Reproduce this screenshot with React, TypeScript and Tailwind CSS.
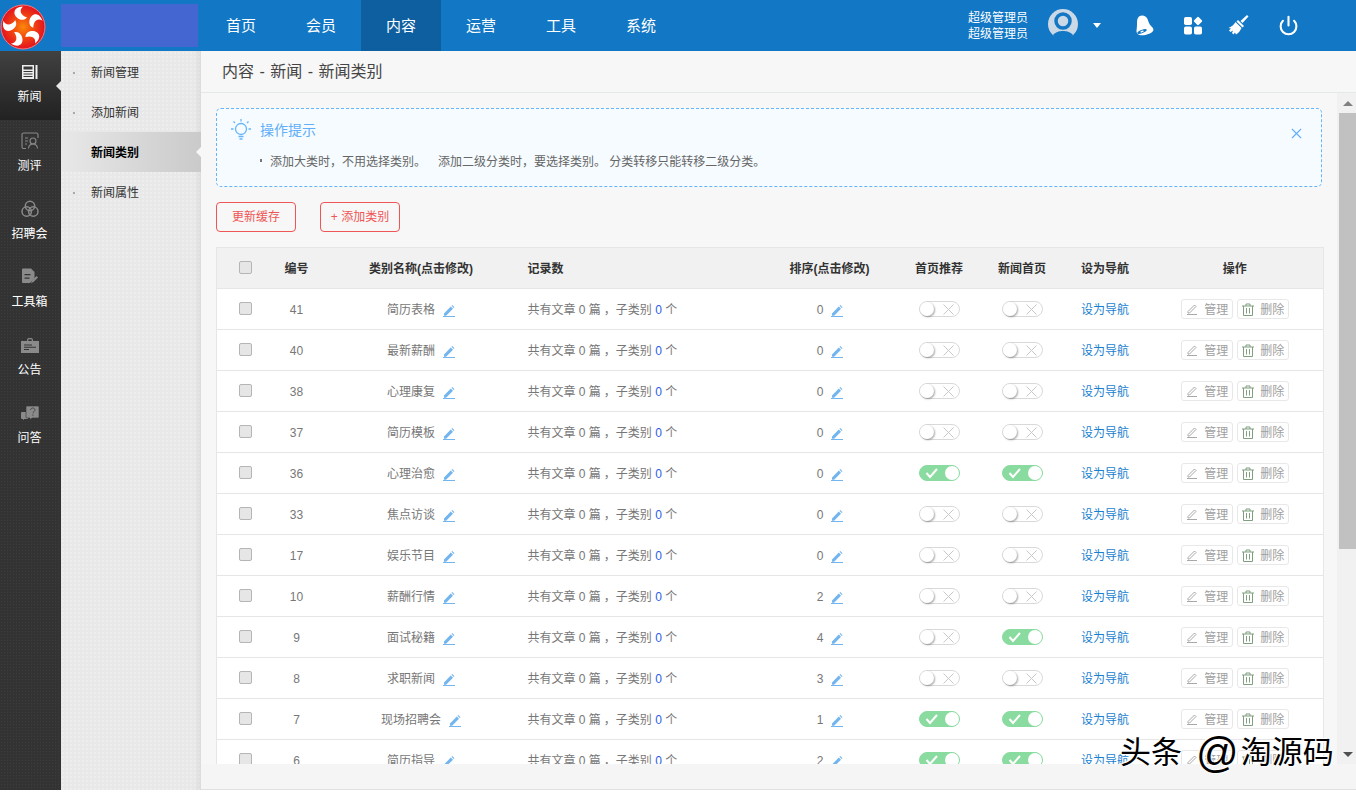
import { Power, X } from 'lucide-react';
import { type FC } from 'react';

const topNav = ['首页', '会员', '内容', '运营', '工具', '系统'];
const subNav = ['新闻管理', '添加新闻', '新闻类别', '新闻属性'];

const rows = [
  { id: 41, name: '简历表格', sort: 0, home: false, news: false },
  { id: 40, name: '最新薪酬', sort: 0, home: false, news: false },
  { id: 38, name: '心理康复', sort: 0, home: false, news: false },
  { id: 37, name: '简历模板', sort: 0, home: false, news: false },
  { id: 36, name: '心理治愈', sort: 0, home: true, news: true },
  { id: 33, name: '焦点访谈', sort: 0, home: false, news: false },
  { id: 17, name: '娱乐节目', sort: 0, home: false, news: false },
  { id: 10, name: '薪酬行情', sort: 2, home: false, news: false },
  { id: 9, name: '面试秘籍', sort: 4, home: false, news: true },
  { id: 8, name: '求职新闻', sort: 3, home: false, news: false },
  { id: 7, name: '现场招聘会', sort: 1, home: true, news: true },
  { id: 6, name: '简历指导', sort: 2, home: true, news: true }
];

const Logo: FC = () => (
  <svg width="46" height="46" viewBox="-23 -23 46 46" className="mt-[2px]">
    <defs>
      <radialGradient id="logoCore">
        <stop offset="0" stopColor="#f98a0a" />
        <stop offset="0.4" stopColor="#f4500e" />
        <stop offset="1" stopColor="#e3121f" />
      </radialGradient>
    </defs>
    <circle r="22" fill="url(#logoCore)" stroke="#f77" strokeWidth="1" />
    {[0, 72, 144, 216, 288].map((angle) => (
      <path
        key={angle}
        d="M-4-8C-11-12-10-20 0-20.500-4-17-3-12 4-9.500 2-7-1-6.500-4-8Z"
        fill="#fff"
        transform={`rotate(${angle})`}
      />
    ))}
  </svg>
);

const NewsIcon: FC = () => (
  <svg width="16" height="16" viewBox="0 0 16 16" fill="#eee">
    <path d="M0 1h12v14H0zM1.500 2.500v3h9v-3zM1.500 7v1h9V7zM1.500 9.500v1h9v-1zM1.500 12v1h9v-1z" fillRule="evenodd" />
    <rect x="13.500" y="1" width="2" height="14" />
  </svg>
);

const ReviewIcon: FC = () => (
  <svg width="18" height="18" viewBox="0 0 18 18" fill="none" stroke="#8a8a8a" strokeWidth="1.100">
    <path d="M5 16.500H2.500a1.500 1.500 0 0 1-1.500-1.500V2.500A1.500 1.500 0 0 1 2.500 1h13A1.500 1.500 0 0 1 17 2.500V6" />
    <path d="M4 6h3M4 9h3M4 12h2" />
    <circle cx="12" cy="9" r="3" />
    <path d="M7.500 16.500c.3-3 2-4.500 4.500-4.500s4.200 1.500 4.500 4.500" />
  </svg>
);

const FairIcon: FC = () => (
  <svg width="18" height="18" viewBox="0 0 18 18" fill="none" stroke="#8a8a8a" strokeWidth="1.500">
    <circle cx="9" cy="6" r="4.700" />
    <circle cx="5.700" cy="11.500" r="4.700" />
    <circle cx="12.300" cy="11.500" r="4.700" />
  </svg>
);

const ToolIcon: FC = () => (
  <svg width="17" height="18" viewBox="0 0 17 18" fill="#8a8a8a">
    <path d="M1 1.500A1 1 0 0 1 2 .5h8l3.500 3.500v6l-4.500 5H2a1 1 0 0 1-1-1z" />
    <path d="M3.500 6h6v1.300h-6zM3.500 9.500h5v1.300h-5z" fill="#333" />
    <path d="M10 15l1-2.500 4.500-4.500 1.500 1.500-4.500 4.500z" />
  </svg>
);

const NoticeIcon: FC = () => (
  <svg width="18" height="15" viewBox="0 0 18 15" fill="#8a8a8a">
    <path d="M6 3V2a2 2 0 0 1 2-2h2a2 2 0 0 1 2 2v1h-1.200V2a.8.8 0 0 0-.8-.8H8a.8.8 0 0 0-.8.8v1z" />
    <path d="M0 3h18v12H0z" />
    <path d="M3 6.500h8v1H3zM3 8.800h12v1H3zM3 11h5v1H3z" fill="#333" />
  </svg>
);

const QaIcon: FC = () => (
  <svg width="18" height="15" viewBox="0 0 18 15">
    <path d="M0 7a1 1 0 0 1 1-1h6v7H3l-1 1.500V13H1a1 1 0 0 1-1-1z" fill="#8a8a8a" />
    <path d="M5 1a1 1 0 0 1 1-1h11a1 1 0 0 1 1 1v10a1 1 0 0 1-1 1h-6l-2 2v-2H6a1 1 0 0 1-1-1z" fill="#8a8a8a" stroke="#333" strokeWidth="0.600" />
    <path d="M9.500 4c.2-1.300 1.200-2 2.300-2 1.300 0 2.200.8 2.200 1.900 0 1.800-2 1.700-2 3.400M11.900 8.500v1.300" fill="none" stroke="#444" strokeWidth="0.900" />
  </svg>
);

const sideNav = [
  { label: '新闻', icon: <NewsIcon /> },
  { label: '测评', icon: <ReviewIcon /> },
  { label: '招聘会', icon: <FairIcon /> },
  { label: '工具箱', icon: <ToolIcon /> },
  { label: '公告', icon: <NoticeIcon /> },
  { label: '问答', icon: <QaIcon /> }
];

const Pencil: FC = () => (
  <svg width="12" height="13" viewBox="0 0 12 13" className="shrink-0" fill="#73b5ee">
    <path d="M1 9.500 7.800 2.500l2.200 2.200-6.900 7H1zM8.500 1.800l.8-.8 2.200 2.200-.8.800z" />
    <rect x="0" y="12" width="12" height="1" />
  </svg>
);

const Toggle: FC<{ on: boolean }> = ({ on }) =>
  on ? (
    <span className="inline-flex h-4 w-[41px] items-center justify-between rounded-full border border-[#8adba0] bg-[#8adba0] pl-[5px] align-middle">
      <svg width="14" height="12" viewBox="0 0 14 12" fill="none" stroke="#fff" strokeWidth="2">
        <path d="M1.500 6l3.500 4 7-8" />
      </svg>
      <span className="h-[14px] w-[14px] rounded-full bg-white" />
    </span>
  ) : (
    <span className="inline-flex h-4 w-[41px] items-center justify-between rounded-full border border-[#d9d9d9] bg-white pr-[5px] align-middle">
      <span className="h-[14px] w-[14px] rounded-full bg-white shadow-[1px_1px_2px_rgba(0,0,0,0.35)]" />
      <svg width="11" height="11" viewBox="0 0 11 11" fill="none" stroke="#c8c8c8" strokeWidth="1">
        <path d="M.5.500l10 10M10.500.500l-10 10" />
      </svg>
    </span>
  );

const ActionButton: FC<{ label: string; trash?: boolean }> = ({ label, trash }) => (
  <span className="inline-flex h-[20px] w-[52px] items-center justify-center gap-[6px] rounded-[3px] border border-[#e8e8e8] bg-white text-xs text-[#a0a0a0]">
    {trash ? (
      <svg width="12" height="13" viewBox="0 0 12 13" fill="none" stroke="#7f9f7f" strokeWidth="1">
        <path d="M0 3h12M4 3V1h4v2M1.500 3v9.500h9V3M4.500 5v5.500M7.500 5v5.500" />
      </svg>
    ) : (
      <svg width="12" height="12" viewBox="0 0 12 12" fill="none" stroke="#a8a8a8" strokeWidth="1">
        <path d="M2 8.500 8.500 2l1.500 1.500L3.500 10H2zM1 11.500h10" />
      </svg>
    )}
    <span className="pt-[2px] leading-none">{label}</span>
  </span>
);

const HeadCell: FC<{ label: string; className?: string }> = ({ label, className = 'text-center' }) => (
  <th className={`pt-[2px] font-bold text-[#333] ${className}`}>{label}</th>
);

const Checkbox: FC = () => (
  <span className="mb-[2px] inline-block h-[13px] w-[13px] rounded-[2px] border border-[#b5b5b5] bg-[#e6e6e6] align-middle" />
);

export default function App() {
  return (
    <div className="relative h-[793px] w-[1356px] overflow-hidden bg-white text-xs font-['Liberation_Sans','Noto_Sans_CJK_SC',sans-serif]">
      <div className="flex h-[790px] flex-col bg-[#f7f7f7]">
        <header className="flex h-[51px] shrink-0 bg-[#1277c4] text-white">
          <div className="flex w-[61px] items-center">
            <Logo />
          </div>
          <div className="mt-1 h-[43px] w-[137px] bg-[#4466d0]" />
          <nav className="ml-[3px] flex">
            {topNav.map((item) => (
              <div
                key={item}
                className={`flex w-20 items-center justify-center text-[15px] ${item === '内容' ? 'bg-[#0e5f9f]' : ''}`}
              >
                {item}
              </div>
            ))}
          </nav>
          <div className="ml-auto flex items-center pr-[57px]">
            <div className="text-xs leading-4">
              <div>超级管理员</div>
              <div>超级管理员</div>
            </div>
            <svg width="30" height="30" viewBox="0 0 30 30" className="mb-[3px] ml-5">
              <circle cx="15" cy="15" r="15" fill="#cbd8e6" />
              <circle cx="15" cy="12" r="7" fill="none" stroke="#1277c4" strokeWidth="3.500" />
              <path d="M5 26c3-3.500 7-4 10-4s7 .5 10 4c-2 3-5 5-10 5S7 29 5 26z" fill="#1277c4" />
            </svg>
            <span className="ml-[15px] h-0 w-0 border-x-[4.500px] border-t-[5px] border-x-transparent border-t-white" />
            <svg width="20" height="22" viewBox="0 0 20 22" className="ml-[34px]" fill="#fff">
              <path d="M4 1.500C7-.5 11 .5 12.500 4c1 2.500 1.500 5 4 7.500 1.500 1.500 2.500 3 1.500 4.500-2 3-9 5-13.500 4-1.500-.5-2.500-1.500-3-3C1.500 14.500 2 12 2 9c0-3 0-6 2-7.500z" />
              <ellipse cx="7" cy="16.500" rx="5" ry="1.600" fill="#1277c4" transform="rotate(-20 7 16.500)" />
              <ellipse cx="7" cy="16.500" rx="1.800" ry="0.700" fill="#fff" transform="rotate(-20 7 16.500)" />
            </svg>
            <svg width="19" height="19" viewBox="0 0 19 19" className="ml-[29px]" fill="#fff">
              <rect x="0" y="1" width="8" height="8" rx="1.800" />
              <rect x="0" y="10.500" width="8" height="8" rx="1.800" />
              <rect x="10" y="10.500" width="8" height="8" rx="1.800" />
              <rect x="10.700" y="1.700" width="6.600" height="6.600" rx="1.200" transform="rotate(45 14 5)" />
            </svg>
            <svg width="21" height="21" viewBox="0 0 21 21" className="ml-[25px]" fill="#fff">
              <path d="M12.500 6 19 0l1.500 1.500-6 6.500z" />
              <path d="M10 5l6 6-1.500 1.500-6-6z" />
              <path d="M7.500 7l6 6c-1 2.500-3 5-5.500 6.500l-1-2-1.500 2-1.500-1.500 1-2.500-2.500 1.500L1 15.500l2-2-2.500-.5C3 12 6 10 7.500 7z" />
            </svg>
            <Power className="ml-[29px] h-[21px] w-[21px]" strokeWidth={2.4} />
          </div>
        </header>

        <div className="flex min-h-0 flex-1">
          <aside className="w-[61px] shrink-0 bg-[#333] bg-[radial-gradient(#3d3d3d_1px,transparent_1px)] bg-[length:3px_3px] text-white">
            {sideNav.map((item, i) => (
              <div
                key={item.label}
                className={`relative flex flex-col items-center pr-[2px] pt-[12px] ${i === 0 ? 'h-[69px] bg-gradient-to-b from-[#414141] to-[#222]' : 'h-[68px]'}`}
              >
                <div className="flex h-[18px] items-center">{item.icon}</div>
                <div className="mt-[7px] text-xs leading-[18px]">{item.label}</div>
                {i === 0 && (
                  <span className="absolute right-0 top-[30px] h-0 w-0 border-y-[5px] border-r-[5px] border-y-transparent border-r-[#e8e8e8]" />
                )}
              </div>
            ))}
          </aside>

          <aside className="w-[140px] shrink-0 bg-[#e8e8e8] bg-[radial-gradient(#eeeeee_1px,transparent_1px)] bg-[length:4px_4px] pt-px shadow-[inset_-6px_0_6px_-4px_rgba(0,0,0,0.08)]">
            {subNav.map((item) => {
              const active = item === '新闻类别';
              return (
                <div
                  key={item}
                  className={`relative flex h-10 items-center pl-[30px] pt-[2px] text-xs ${active ? 'bg-gradient-to-r from-[#e8e8e8] to-[#cacaca] font-bold text-black' : 'text-[#333]'}`}
                >
                  {!active && <span className="absolute left-[12px] top-[20px] h-[2px] w-[2px] bg-[#aaa]" />}
                  {item}
                  {active && (
                    <span className="absolute right-0 top-[15px] h-0 w-0 border-y-[5px] border-r-[5px] border-y-transparent border-r-[#f7f7f7]" />
                  )}
                </div>
              );
            })}
          </aside>

          <main className="flex min-w-0 flex-1 flex-col">
            <div className="flex h-[42px] shrink-0 items-center border-b border-[#e4e8e8] pl-[21px] text-base text-[#444] [word-spacing:1px]">
              内容 - 新闻 - 新闻类别
            </div>
            <div className="flex h-[671px] shrink-0">
              <div className="min-w-0 flex-1 overflow-hidden pl-[15px] pr-[15px] pt-[15px]">
                <div className="relative h-[79px] w-[1106px] rounded-[5px] border border-dashed border-[#66b5fb] bg-[#f5fbff]">
                  <svg width="22" height="22" viewBox="0 0 22 22" className="absolute left-[13px] top-[10px]" fill="none" stroke="#66b5fb" strokeWidth="1.300">
                    <circle cx="11" cy="10" r="5.500" />
                    <path d="M8.500 17.500h5M9.500 20h3M11 0v2.500M1 10h2.500M18.500 10H21M3.500 2.500l1.500 1.500M18.500 2.500 17 4" />
                  </svg>
                  <div className="absolute left-[43px] top-[12px] text-sm leading-[18px] text-[#62aef8]">操作提示</div>
                  <span className="absolute left-[43px] top-[50px] h-[3px] w-[2px] bg-[#777]" />
                  <div className="absolute left-[53px] top-[44px] whitespace-pre text-xs leading-[18px] text-[#666]">
                    添加大类时，不用选择类别。   <span className="ml-[2px]">添加二级分类时，要选择类别。 分类转移只能转移二级分类。</span>
                  </div>
                  <X className="absolute right-[16px] top-[16px] h-[17px] w-[17px] text-[#62aef8]" strokeWidth={1.5} />
                </div>

                <div className="mt-[15px] flex gap-6">
                  <button className="h-[30px] w-20 rounded-[4px] border border-[#ee5555] text-xs text-[#ee5555]">更新缓存</button>
                  <button className="h-[30px] w-20 rounded-[4px] border border-[#ee5555] text-xs text-[#ee5555]">+ 添加类别</button>
                </div>

                <table className="mt-[15px] w-[1107px] table-fixed border border-[#e6e6e6] bg-white text-xs">
                  <colgroup>
                    <col className="w-[58px]" />
                    <col className="w-[44px]" />
                    <col className="w-[205px]" />
                    <col className="w-[238px]" />
                    <col className="w-[136px]" />
                    <col className="w-[83px]" />
                    <col className="w-[83px]" />
                    <col className="w-[83px]" />
                    <col className="w-[177px]" />
                  </colgroup>
                  <thead>
                    <tr className="h-[41px] bg-[#f1f1f1]">
                      <th>
                        <Checkbox />
                      </th>
                      <HeadCell label="编号" />
                      <HeadCell label="类别名称(点击修改)" />
                      <HeadCell label="记录数" className="pl-1 text-left" />
                      <HeadCell label="排序(点击修改)" />
                      <HeadCell label="首页推荐" />
                      <HeadCell label="新闻首页" />
                      <HeadCell label="设为导航" />
                      <HeadCell label="操作" />
                    </tr>
                  </thead>
                  <tbody>
                    {rows.map((row) => (
                      <tr key={row.id} className="h-[41px] border-t border-[#e6e6e6] text-[#777]">
                        <td className="pr-px text-center">
                          <Checkbox />
                        </td>
                        <td className="pt-[2px] text-center">{row.id}</td>
                        <td className="pt-[2px]">
                          <div className="flex items-center justify-center gap-2">
                            {row.name}
                            <Pencil />
                          </div>
                        </td>
                        <td className="pl-1 pt-[2px]">
                          共有文章 0 篇<span className="ml-[3px]">，</span>子类别 <span className="text-[#2a5ee8]">0</span> 个
                        </td>
                        <td className="pl-px pt-[2px]">
                          <div className="flex items-center justify-center gap-[8px]">
                            {row.sort}
                            <Pencil />
                          </div>
                        </td>
                        <td className="text-center">
                          <Toggle on={row.home} />
                        </td>
                        <td className="text-center">
                          <Toggle on={row.news} />
                        </td>
                        <td className="pt-[2px] text-center text-[#1a7fd0]">设为导航</td>
                        <td className="pl-px">
                          <div className="flex items-center justify-center gap-1">
                            <ActionButton label="管理" />
                            <ActionButton label="删除" trash />
                          </div>
                        </td>
                      </tr>
                    ))}
                  </tbody>
                </table>
              </div>

              <div className="flex w-[19px] shrink-0 flex-col bg-[#f1f1f1] pl-[2px]">
                <div className="flex h-[20px] items-center justify-center">
                  <span className="h-0 w-0 border-x-[5px] border-b-[5px] border-x-transparent border-b-[#808080]" />
                </div>
                <div className="h-[436px] bg-[#c1c1c1]" />
                <div className="mt-auto flex h-[20px] items-center justify-center">
                  <span className="h-0 w-0 border-x-[5px] border-t-[5px] border-x-transparent border-t-[#505050]" />
                </div>
              </div>
            </div>
            <div className="flex-1 border-b border-[#e0e0e0] bg-[#f5f5f5]" />
          </main>
        </div>
      </div>

      <div className="absolute left-[1120px] top-[734px] flex h-[38px] items-center whitespace-nowrap text-[31px] text-black [text-shadow:0_0_2px_#fff,1px_1px_1px_#fff,-1px_-1px_1px_#fff]">
        头条<span className="ml-[14px] mr-[2px] text-[42px] leading-none">@</span>淘源码
      </div>
    </div>
  );
}
